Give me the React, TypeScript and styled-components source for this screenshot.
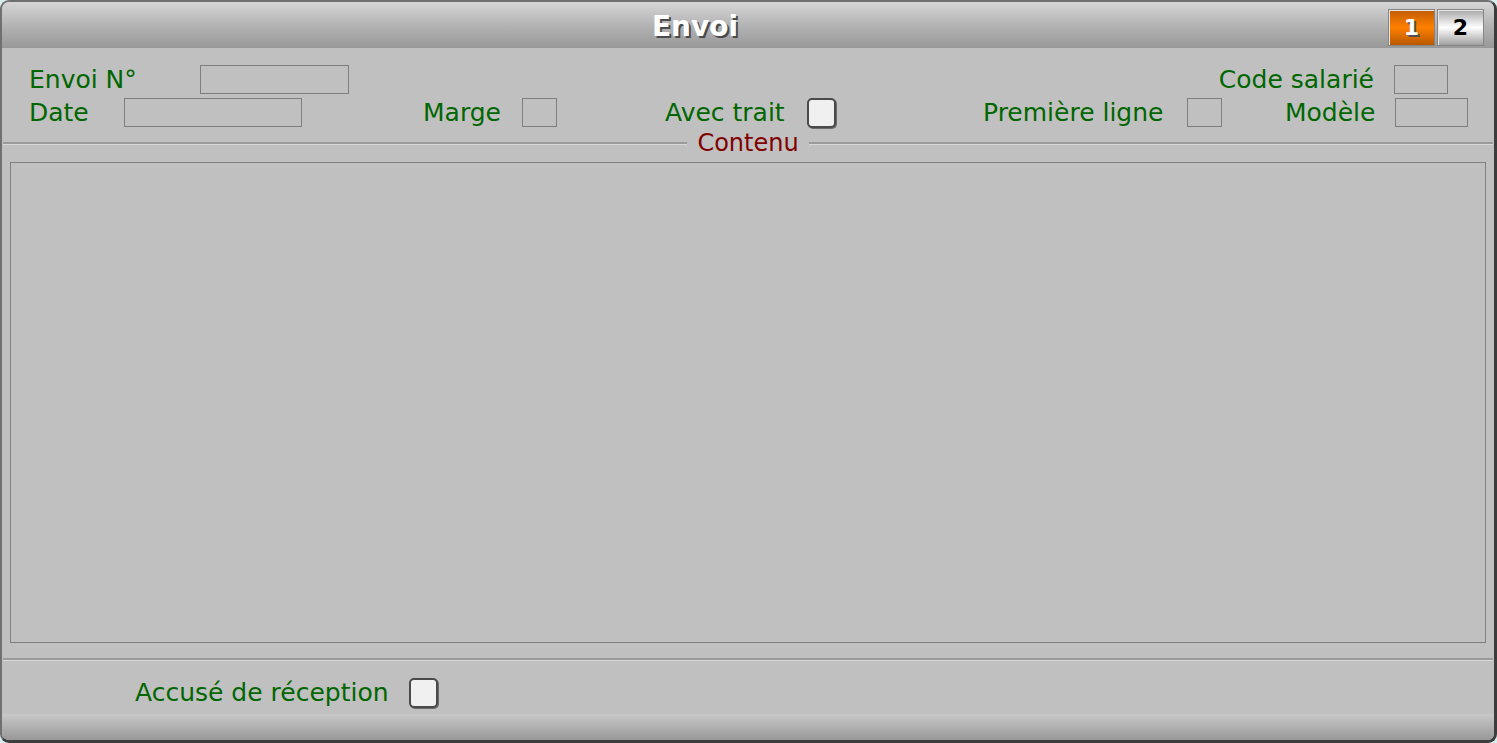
import styled, { createGlobalStyle } from "styled-components";

const GlobalStyle = createGlobalStyle`
  html, body {
    margin: 0;
    padding: 0;
    background: #d6eeee;
  }
  body {
    font-family: "DejaVu Sans", Verdana, sans-serif;
  }
`;

const Window = styled.div`
  display: flex;
  flex-direction: column;
  width: 1497px;
  height: 743px;
  box-sizing: border-box;
  border-radius: 9px;
  border-top: 2px solid #707070;
  border-left: 2px solid #707070;
  border-right: 3px solid #3c3c3c;
  border-bottom: 3px solid #3c3c3c;
  background: #c0c0c0;
  overflow: hidden;
`;

const TitleBar = styled.div`
  display: flex;
  align-items: center;
  height: 46px;
  padding-right: 10px;
  flex-shrink: 0;
  background: linear-gradient(#d6d6d6, #b4b4b4 50%, #989898);
`;

const Title = styled.h1`
  flex: 1;
  margin: 2px 0 0 0;
  text-align: center;
  font-family: "DejaVu Sans", Verdana, sans-serif;
  font-weight: bold;
  font-size: 28px;
  color: #ffffff;
  text-shadow: 2px 2px 0 #4a4a4a;
`;

const Tabs = styled.div`
  display: flex;
  gap: 2px;
  margin-top: 5px;
`;

const Tab = styled.div<{ $active?: boolean }>`
  display: flex;
  align-items: center;
  justify-content: center;
  width: 47px;
  height: 37px;
  box-sizing: border-box;
  border: 1px solid #858585;
  box-shadow: inset 1px 1px 0 #e8e8e8;
  font-weight: bold;
  font-size: 22px;
  color: ${(p) => (p.$active ? "#ffffff" : "#000000")};
  text-shadow: ${(p) => (p.$active ? "2px 2px 0 #505050" : "none")};
  background: ${(p) =>
    p.$active
      ? "linear-gradient(#c05c00, #ff8000 50%, #b85800)"
      : "linear-gradient(#a8a8a8, #ffffff 50%, #a0a0a0)"};
`;

const Fields = styled.div`
  display: flex;
  flex-direction: column;
  gap: 4px;
  box-sizing: border-box;
  padding: 17px 46px 0 27px;
  height: 86px;
  flex-shrink: 0;
`;

const Row = styled.div`
  display: flex;
  align-items: center;
  height: 29px;
`;

const Label = styled.span<{ $w?: number; $ml?: number }>`
  width: ${(p) => (p.$w ? `${p.$w}px` : "auto")};
  margin-left: ${(p) => (p.$ml !== undefined ? `${p.$ml}px` : "0")};
  flex-shrink: 0;
  font-size: 25px;
  color: #006600;
  white-space: nowrap;
`;

const PushedLabel = styled(Label)`
  margin-left: auto;
  margin-right: 20px;
`;

const Input = styled.div<{ $w: number }>`
  width: ${(p) => p.$w}px;
  height: 29px;
  box-sizing: border-box;
  border: 1px solid #7e7e7e;
  flex-shrink: 0;
`;

const Check = styled.div`
  width: 29px;
  height: 30px;
  box-sizing: border-box;
  border: 2px solid #4a4a4a;
  border-radius: 5px;
  background: #f0f0f0;
  box-shadow: 1px 1px 0 #6a6a6a;
  flex-shrink: 0;
`;

const Legend = styled.div`
  display: flex;
  align-items: center;
  gap: 10px;
  height: 18px;
  margin: 0 1px;
  flex-shrink: 0;
`;

const Rule = styled.div`
  flex: 1;
  height: 2px;
  background: #9a9a9a;
  border-bottom: 1px solid #d8d8d8;
`;

const LegendText = styled.span`
  font-size: 24px;
  color: #800000;
  line-height: 18px;
`;

const Content = styled.div`
  margin: 10px 8px 0 8px;
  height: 481px;
  box-sizing: border-box;
  border: 1px solid #808080;
  flex-shrink: 0;
`;

const Divider = styled.div`
  margin: 15px 1px 0 1px;
  height: 2px;
  background: #9a9a9a;
  border-bottom: 1px solid #d8d8d8;
  flex-shrink: 0;
`;

const Footer = styled.div`
  display: flex;
  align-items: center;
  box-sizing: border-box;
  height: 53px;
  padding: 10px 0 0 133px;
  flex-shrink: 0;
`;

const BottomBar = styled.div`
  flex: 1;
  background: linear-gradient(#c8c8c8, #989898);
`;

export default function App() {
  return (
    <>
      <GlobalStyle />
      <Window>
        <TitleBar>
          <Title>Envoi</Title>
          <Tabs>
            <Tab $active>1</Tab>
            <Tab>2</Tab>
          </Tabs>
        </TitleBar>
        <Fields>
          <Row>
            <Label $w={171}>Envoi N°</Label>
            <Input $w={149} />
            <PushedLabel>Code salarié</PushedLabel>
            <Input $w={54} />
          </Row>
          <Row>
            <Label $w={95}>Date</Label>
            <Input $w={178} />
            <Label $w={99} $ml={121}>Marge</Label>
            <Input $w={35} />
            <Label $w={142} $ml={108}>Avec trait</Label>
            <Check />
            <Label $w={204} $ml={147}>Première ligne</Label>
            <Input $w={35} />
            <Label $w={110} $ml={63}>Modèle</Label>
            <Input $w={73} />
          </Row>
        </Fields>
        <Legend>
          <Rule />
          <LegendText>Contenu</LegendText>
          <Rule />
        </Legend>
        <Content />
        <Divider />
        <Footer>
          <Label $w={274}>Accusé de réception</Label>
          <Check />
        </Footer>
        <BottomBar />
      </Window>
    </>
  );
}
